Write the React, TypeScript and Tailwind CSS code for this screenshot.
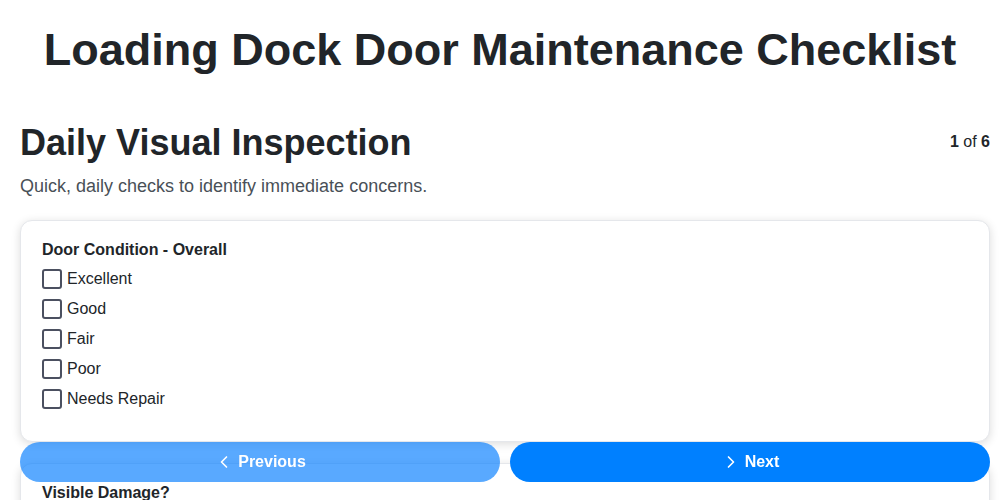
import { ChevronLeft, ChevronRight } from 'lucide-react';

interface Question {
  id: string;
  label: string;
  options: string[];
}

const QUESTIONS: Question[] = [
  {
    id: 'condition',
    label: 'Door Condition - Overall',
    options: ['Excellent', 'Good', 'Fair', 'Poor', 'Needs Repair'],
  },
  {
    id: 'damage',
    label: 'Visible Damage?',
    options: ['None', 'Dents', 'Cracks', 'Rust', 'Other'],
  },
];

export default function App() {
  return (
    <div className="min-h-screen bg-white text-[#212529] font-['Liberation_Sans',Arial,sans-serif]">
      <h1 className="pt-[22px] text-center text-[45px] leading-[56px] font-bold">
        Loading Dock Door Maintenance Checklist
      </h1>

      <div className="pl-5 pr-[10px] pb-24">
        {/* Section header */}
        <div className="mt-[42px] flex items-start justify-between">
          <h2 className="text-[36px] leading-[46px] font-bold">Daily Visual Inspection</h2>
          <div className="mt-[10px] text-base">
            <span className="font-bold">1</span> of <span className="font-bold">6</span>
          </div>
        </div>
        <p className="mt-[8px] text-lg leading-6 text-[#495057]">
          Quick, daily checks to identify immediate concerns.
        </p>

        <div className="mt-[22px] flex flex-col gap-[21px]">
          {QUESTIONS.map((q) => (
            <div
              key={q.id}
              className="rounded-xl border border-[#e5e7eb] bg-white px-[21px] pt-[19px] pb-[32px] shadow-[0_2px_10px_rgba(0,0,0,0.14)]"
            >
              <div className="text-base leading-5 font-bold">{q.label}</div>
              <div className="mt-[9px] flex flex-col gap-[10px]">
                {q.options.map((opt) => (
                  <label key={opt} className="flex items-center gap-[5px] text-base leading-5">
                    <span className="h-5 w-5 rounded-[3px] border-2 border-[#4b5060] bg-white" />
                    {opt}
                  </label>
                ))}
              </div>
            </div>
          ))}
        </div>
      </div>

      {/* Floating navigation */}
      <div className="fixed left-5 right-[10px] bottom-[18px] grid grid-cols-2 gap-[10px]">
        <button className="flex h-10 items-center justify-center gap-[4px] rounded-full bg-[#007bff]/65 text-base font-bold text-white">
          <ChevronLeft size={20} strokeWidth={2} />
          Previous
        </button>
        <button className="flex h-10 items-center justify-center gap-[4px] rounded-full bg-[#0080ff] text-base font-bold text-white">
          <ChevronRight size={20} strokeWidth={2} />
          Next
        </button>
      </div>
    </div>
  );
}
